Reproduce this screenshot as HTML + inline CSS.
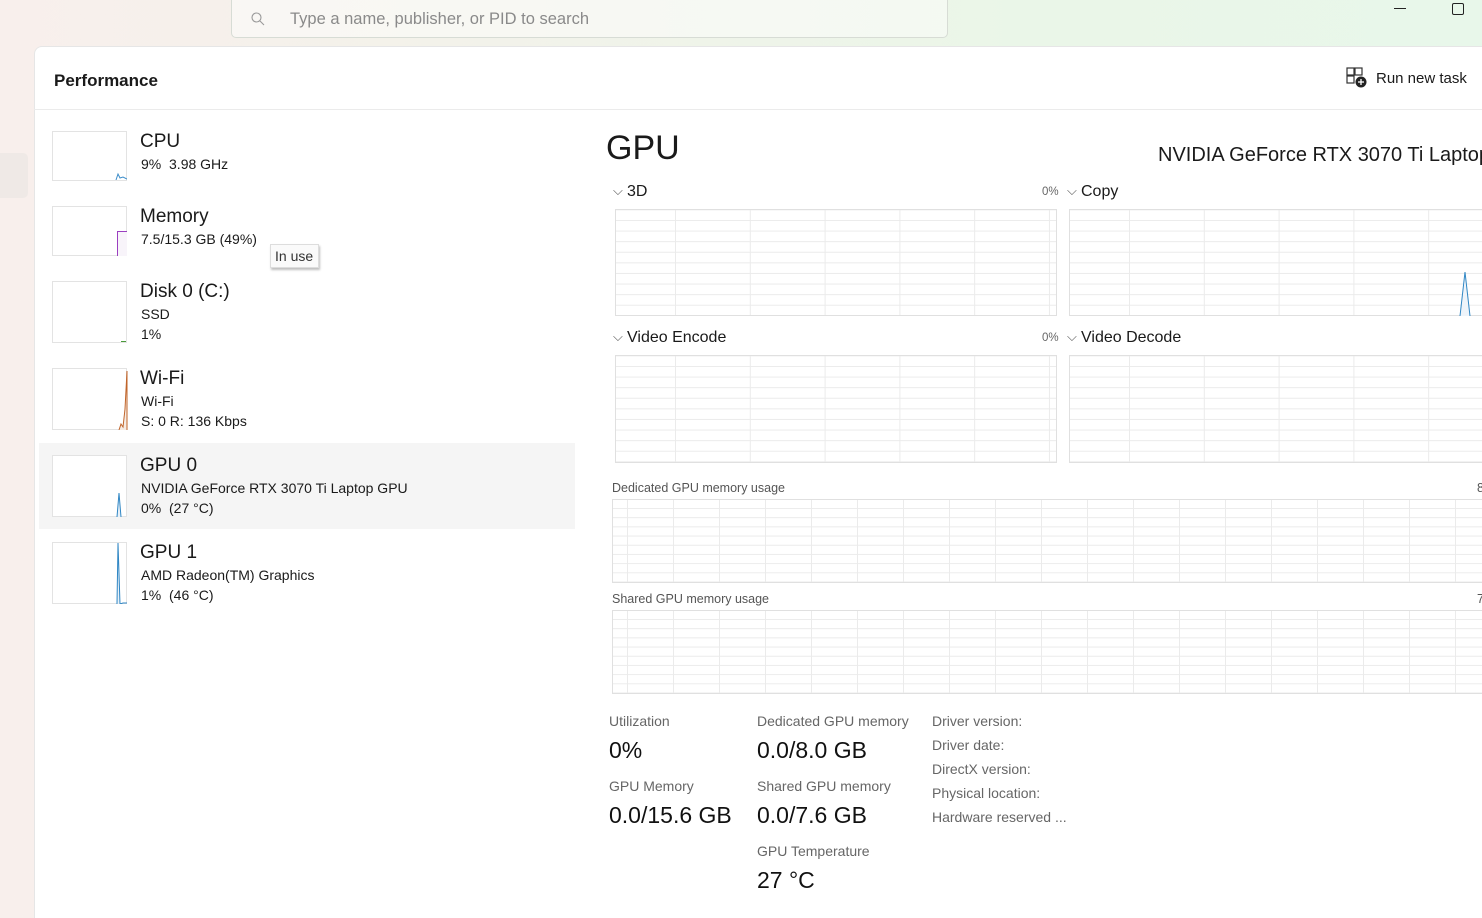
<!DOCTYPE html>
<html><head><meta charset="utf-8"><style>
*{margin:0;padding:0;box-sizing:border-box}
body{width:1482px;height:916px;overflow:hidden;position:relative;font-family:"Segoe UI","Liberation Sans",sans-serif;color:#1a1a1a;background:linear-gradient(90deg,#f8efec 0%,#f3f2ea 30%,#eaf6e8 70%,#e8f7ea 100%)}
.a{position:absolute;white-space:nowrap}
.panel{position:absolute;left:34px;top:46px;width:1460px;height:872px;background:#fff;border-top-left-radius:8px;border:1px solid #e6e6e6;border-bottom:none}
.chart{position:absolute;border:1px solid #e0e0e0;background-color:#fff;
background-image:linear-gradient(to right,#ebebeb 1px,transparent 1px),linear-gradient(to bottom,#ebebeb 1px,transparent 1px);}
.c1{background-size:74.8px 100%,100% 10.6px;background-position:59px 0,0 10px}
.c2{background-size:46px 100%,100% 9.2px;background-position:14px 0,0 8px}
.thumb{position:absolute;left:52px;width:75px;border:1px solid #e3e3e3;background:#fff}
.t1{font-size:19px;margin-top:2px}
.t2{font-size:14px;margin-top:2px}
.lab{font-size:14px;color:#666;margin-top:1px}
.big{font-size:23px;color:#111;margin-top:3px}
.sm{font-size:12.5px;color:#555;margin-top:2px}
.m2{margin-top:2px}
</style></head><body>
<div class="a" style="left:231px;top:0;width:717px;height:38px;border:1px solid #d7dcd5;border-top:none;border-radius:0 0 5px 5px;background:rgba(255,255,255,0.45)"></div>
<svg class="a" style="left:250px;top:11px" width="16" height="16"><circle cx="6.5" cy="6.5" r="4.5" fill="none" stroke="#999" stroke-width="1.1"/><line x1="10" y1="10" x2="14" y2="14" stroke="#999" stroke-width="1.1"/></svg>
<div class="a m2" style="left:290px;top:8px;font-size:16.5px;color:#8a8a8a">Type a name, publisher, or PID to search</div>
<div class="a" style="left:1394px;top:8px;width:12px;height:1px;background:#222"></div>
<div class="a" style="left:1452px;top:3px;width:12px;height:12px;border:1.3px solid #222;border-radius:2px"></div>
<div class="a" style="left:0;top:153px;width:28px;height:45px;background:#efe9e6;border-radius:0 5px 5px 0"></div>

<div class="panel"></div>
<div class="a" style="left:34px;top:109px;width:1448px;height:1px;background:#ebebeb"></div>
<div class="a m2" style="left:54px;top:69px;font-size:17px;font-weight:600">Performance</div>
<svg class="a" style="left:1346px;top:67px" width="22" height="22"><rect x="1" y="1" width="7" height="7" fill="none" stroke="#333" stroke-width="1.2"/><rect x="9" y="1" width="7" height="7" fill="none" stroke="#333" stroke-width="1.2"/><rect x="1" y="9" width="7" height="7" fill="none" stroke="#333" stroke-width="1.2"/><circle cx="15" cy="15" r="5.5" fill="#222"/><line x1="15" y1="12" x2="15" y2="18" stroke="#fff" stroke-width="1.3"/><line x1="12" y1="15" x2="18" y2="15" stroke="#fff" stroke-width="1.3"/></svg>
<div class="a m2" style="left:1376px;top:68px;font-size:15px">Run new task</div>

<!-- sidebar -->
<div class="a" style="left:39px;top:443px;width:536px;height:86px;background:#f5f5f5"></div>
<div class="thumb" style="top:131px;height:50px"><svg class="a" style="left:62px;top:36px" width="12" height="12"><polyline points="1,12 3,6 5,10 8,9 12,11" fill="none" stroke="#3b8cc9" stroke-width="1"/></svg></div>
<div class="a t1" style="left:140px;top:129px">CPU</div>
<div class="a t2" style="left:141px;top:154px">9%&nbsp; 3.98 GHz</div>
<div class="thumb" style="top:206px;height:50px"><div class="a" style="left:64px;top:24px;width:10px;height:25px;border-left:1.5px solid #9b3fc0;border-top:1.5px solid #9b3fc0;background:#f8f4fa"></div></div>
<div class="a t1" style="left:140px;top:204px">Memory</div>
<div class="a t2" style="left:141px;top:229px">7.5/15.3 GB (49%)</div>
<div class="a" style="left:270px;top:244px;width:49px;height:24px;border:1px solid #ddd;background:#fafafa;box-shadow:1px 2px 2px rgba(0,0,0,.25);font-size:14px;color:#333;padding:3px 0 0 4px">In use</div>
<div class="thumb" style="top:281px;height:62px"><div class="a" style="left:68px;bottom:0;width:5px;height:1px;background:#4a9a3a"></div></div>
<div class="a t1" style="left:140px;top:279px">Disk 0 (C:)</div>
<div class="a t2" style="left:141px;top:304px">SSD</div>
<div class="a t2" style="left:141px;top:324px">1%</div>
<div class="thumb" style="top:368px;height:62px"><svg class="a" style="left:64px;top:0" width="11" height="61"><polyline points="2,61 4,55 6,58 8,40 10,2 10,61" fill="#f6ece4" stroke="#c0642a" stroke-width="1"/></svg></div>
<div class="a t1" style="left:140px;top:366px">Wi-Fi</div>
<div class="a t2" style="left:141px;top:391px">Wi-Fi</div>
<div class="a t2" style="left:141px;top:411px">S: 0 R: 136 Kbps</div>
<div class="thumb" style="top:455px;height:62px"><svg class="a" style="left:62px;top:0" width="12" height="61"><polyline points="2,61 4,37 6,61" fill="#e8f1f8" stroke="#2f86c4" stroke-width="1"/></svg></div>
<div class="a t1" style="left:140px;top:453px">GPU 0</div>
<div class="a t2" style="left:141px;top:478px">NVIDIA GeForce RTX 3070 Ti Laptop GPU</div>
<div class="a t2" style="left:141px;top:498px">0%&nbsp; (27 °C)</div>
<div class="thumb" style="top:542px;height:62px"><svg class="a" style="left:62px;top:0" width="12" height="61"><polyline points="2,61 3,0 5,61 8,60 12,60" fill="#e8f1f8" stroke="#2f86c4" stroke-width="1"/></svg></div>
<div class="a t1" style="left:140px;top:540px">GPU 1</div>
<div class="a t2" style="left:141px;top:565px">AMD Radeon(TM) Graphics</div>
<div class="a t2" style="left:141px;top:585px">1%&nbsp; (46 °C)</div>

<!-- main -->
<div class="a m2" style="left:606px;top:127px;font-size:34px">GPU</div>
<div class="a m2" style="left:1158px;top:142px;font-size:20px">NVIDIA GeForce RTX 3070 Ti Laptop GPU</div>
<div class="a m2" style="left:613px;top:181px;font-size:13px;color:#555">⌵</div>
<div class="a m2" style="left:627px;top:181px;font-size:16px">3D</div>
<div class="a m2" style="left:1042px;top:184px;font-size:11.5px;color:#666">0%</div>
<div class="a m2" style="left:1067px;top:181px;font-size:13px;color:#555">⌵</div>
<div class="a m2" style="left:1081px;top:181px;font-size:16px">Copy</div>
<div class="chart c1" style="left:615px;top:209px;width:442px;height:107px"></div>
<div class="chart c1" style="left:1069px;top:209px;width:430px;height:107px"><svg class="a" style="left:388px;top:60px" width="16" height="46"><polyline points="2,46 7,2 12,46" fill="#eef4fa" stroke="#2f86c4" stroke-width="1"/></svg></div>
<div class="a m2" style="left:613px;top:327px;font-size:13px;color:#555">⌵</div>
<div class="a m2" style="left:627px;top:327px;font-size:16px">Video Encode</div>
<div class="a m2" style="left:1042px;top:330px;font-size:11.5px;color:#666">0%</div>
<div class="a m2" style="left:1067px;top:327px;font-size:13px;color:#555">⌵</div>
<div class="a m2" style="left:1081px;top:327px;font-size:16px">Video Decode</div>
<div class="chart c1" style="left:615px;top:355px;width:442px;height:108px"></div>
<div class="chart c1" style="left:1069px;top:355px;width:430px;height:108px"></div>

<div class="a sm" style="left:612px;top:479px">Dedicated GPU memory usage</div>
<div class="a sm" style="left:1477px;top:479px">8</div>
<div class="chart c2" style="left:612px;top:499px;width:890px;height:84px"></div>
<div class="a sm" style="left:612px;top:590px">Shared GPU memory usage</div>
<div class="a sm" style="left:1477px;top:590px">7</div>
<div class="chart c2" style="left:612px;top:610px;width:890px;height:84px"></div>

<div class="a lab" style="left:609px;top:712px">Utilization</div>
<div class="a big" style="left:609px;top:734px">0%</div>
<div class="a lab" style="left:609px;top:777px">GPU Memory</div>
<div class="a big" style="left:609px;top:799px">0.0/15.6 GB</div>
<div class="a lab" style="left:757px;top:712px">Dedicated GPU memory</div>
<div class="a big" style="left:757px;top:734px">0.0/8.0 GB</div>
<div class="a lab" style="left:757px;top:777px">Shared GPU memory</div>
<div class="a big" style="left:757px;top:799px">0.0/7.6 GB</div>
<div class="a lab" style="left:757px;top:842px">GPU Temperature</div>
<div class="a big" style="left:757px;top:864px">27 °C</div>
<div class="a lab" style="left:932px;top:712px">Driver version:</div>
<div class="a lab" style="left:932px;top:736px">Driver date:</div>
<div class="a lab" style="left:932px;top:760px">DirectX version:</div>
<div class="a lab" style="left:932px;top:784px">Physical location:</div>
<div class="a lab" style="left:932px;top:808px">Hardware reserved ...</div>
</body></html>
